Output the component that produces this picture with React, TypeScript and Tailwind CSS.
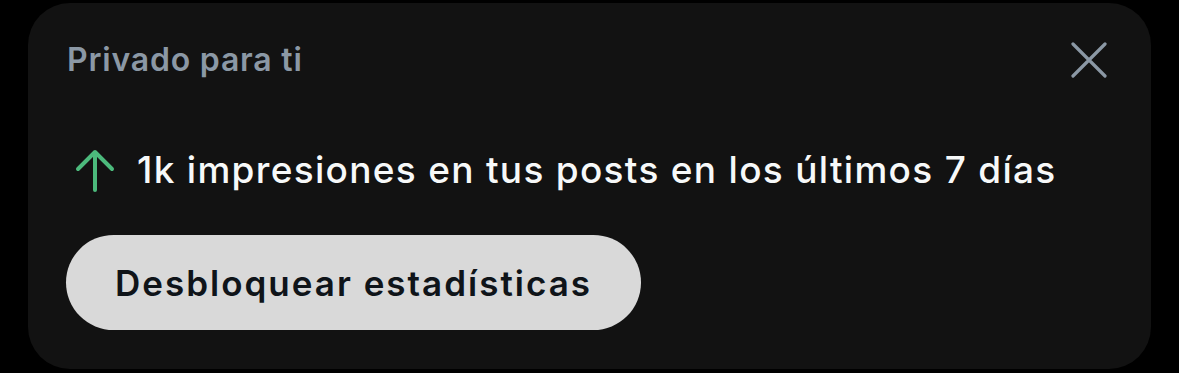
export default function App() {
  return (
    <div className="w-[1179px] h-[373px] bg-black pl-[28px] pt-[3px]" style={{ fontFamily: "Inter, 'Noto Sans', sans-serif" }}>
      <div className="w-[1123px] h-[366px] rounded-[42px] bg-[#121212] pl-[39px] pr-[44px] pt-[38px]">
        <div className="h-[38px] flex items-center justify-between">
          <span className="text-[32px] leading-[38px] font-semibold tracking-[0.8px] text-[#8b98a5]">Privado para ti</span>
          <svg width="36" height="36" viewBox="0 0 36 36" className="text-[#8b98a5]">
            <path d="M2 2 L34 34 M34 2 L2 34" stroke="currentColor" strokeWidth="3.2" strokeLinecap="round" fill="none" />
          </svg>
        </div>
        <div className="mt-[69px] h-[44px] flex items-center">
          <svg width="40" height="44" viewBox="0 0 40 44" className="ml-[8px] text-[#4cba7c]">
            <path d="M3 21 L20 4 L37 21 M20 4 L20 42" stroke="currentColor" strokeWidth="4" strokeLinecap="round" strokeLinejoin="round" fill="none" />
          </svg>
          <span className="ml-[22px] text-[37px] leading-[44px] font-medium tracking-[1.3px] text-[#f7f9f9]">
            1k impresiones en tus posts en los últimos 7 días
          </span>
        </div>
        <button className="mt-[43px] -ml-[1px] w-[575px] h-[95px] rounded-full bg-[#d9d9d9] text-[35px] leading-[40px] font-semibold tracking-[2px] text-[#0f1419]">
          Desbloquear estadísticas
        </button>
      </div>
    </div>
  );
}
